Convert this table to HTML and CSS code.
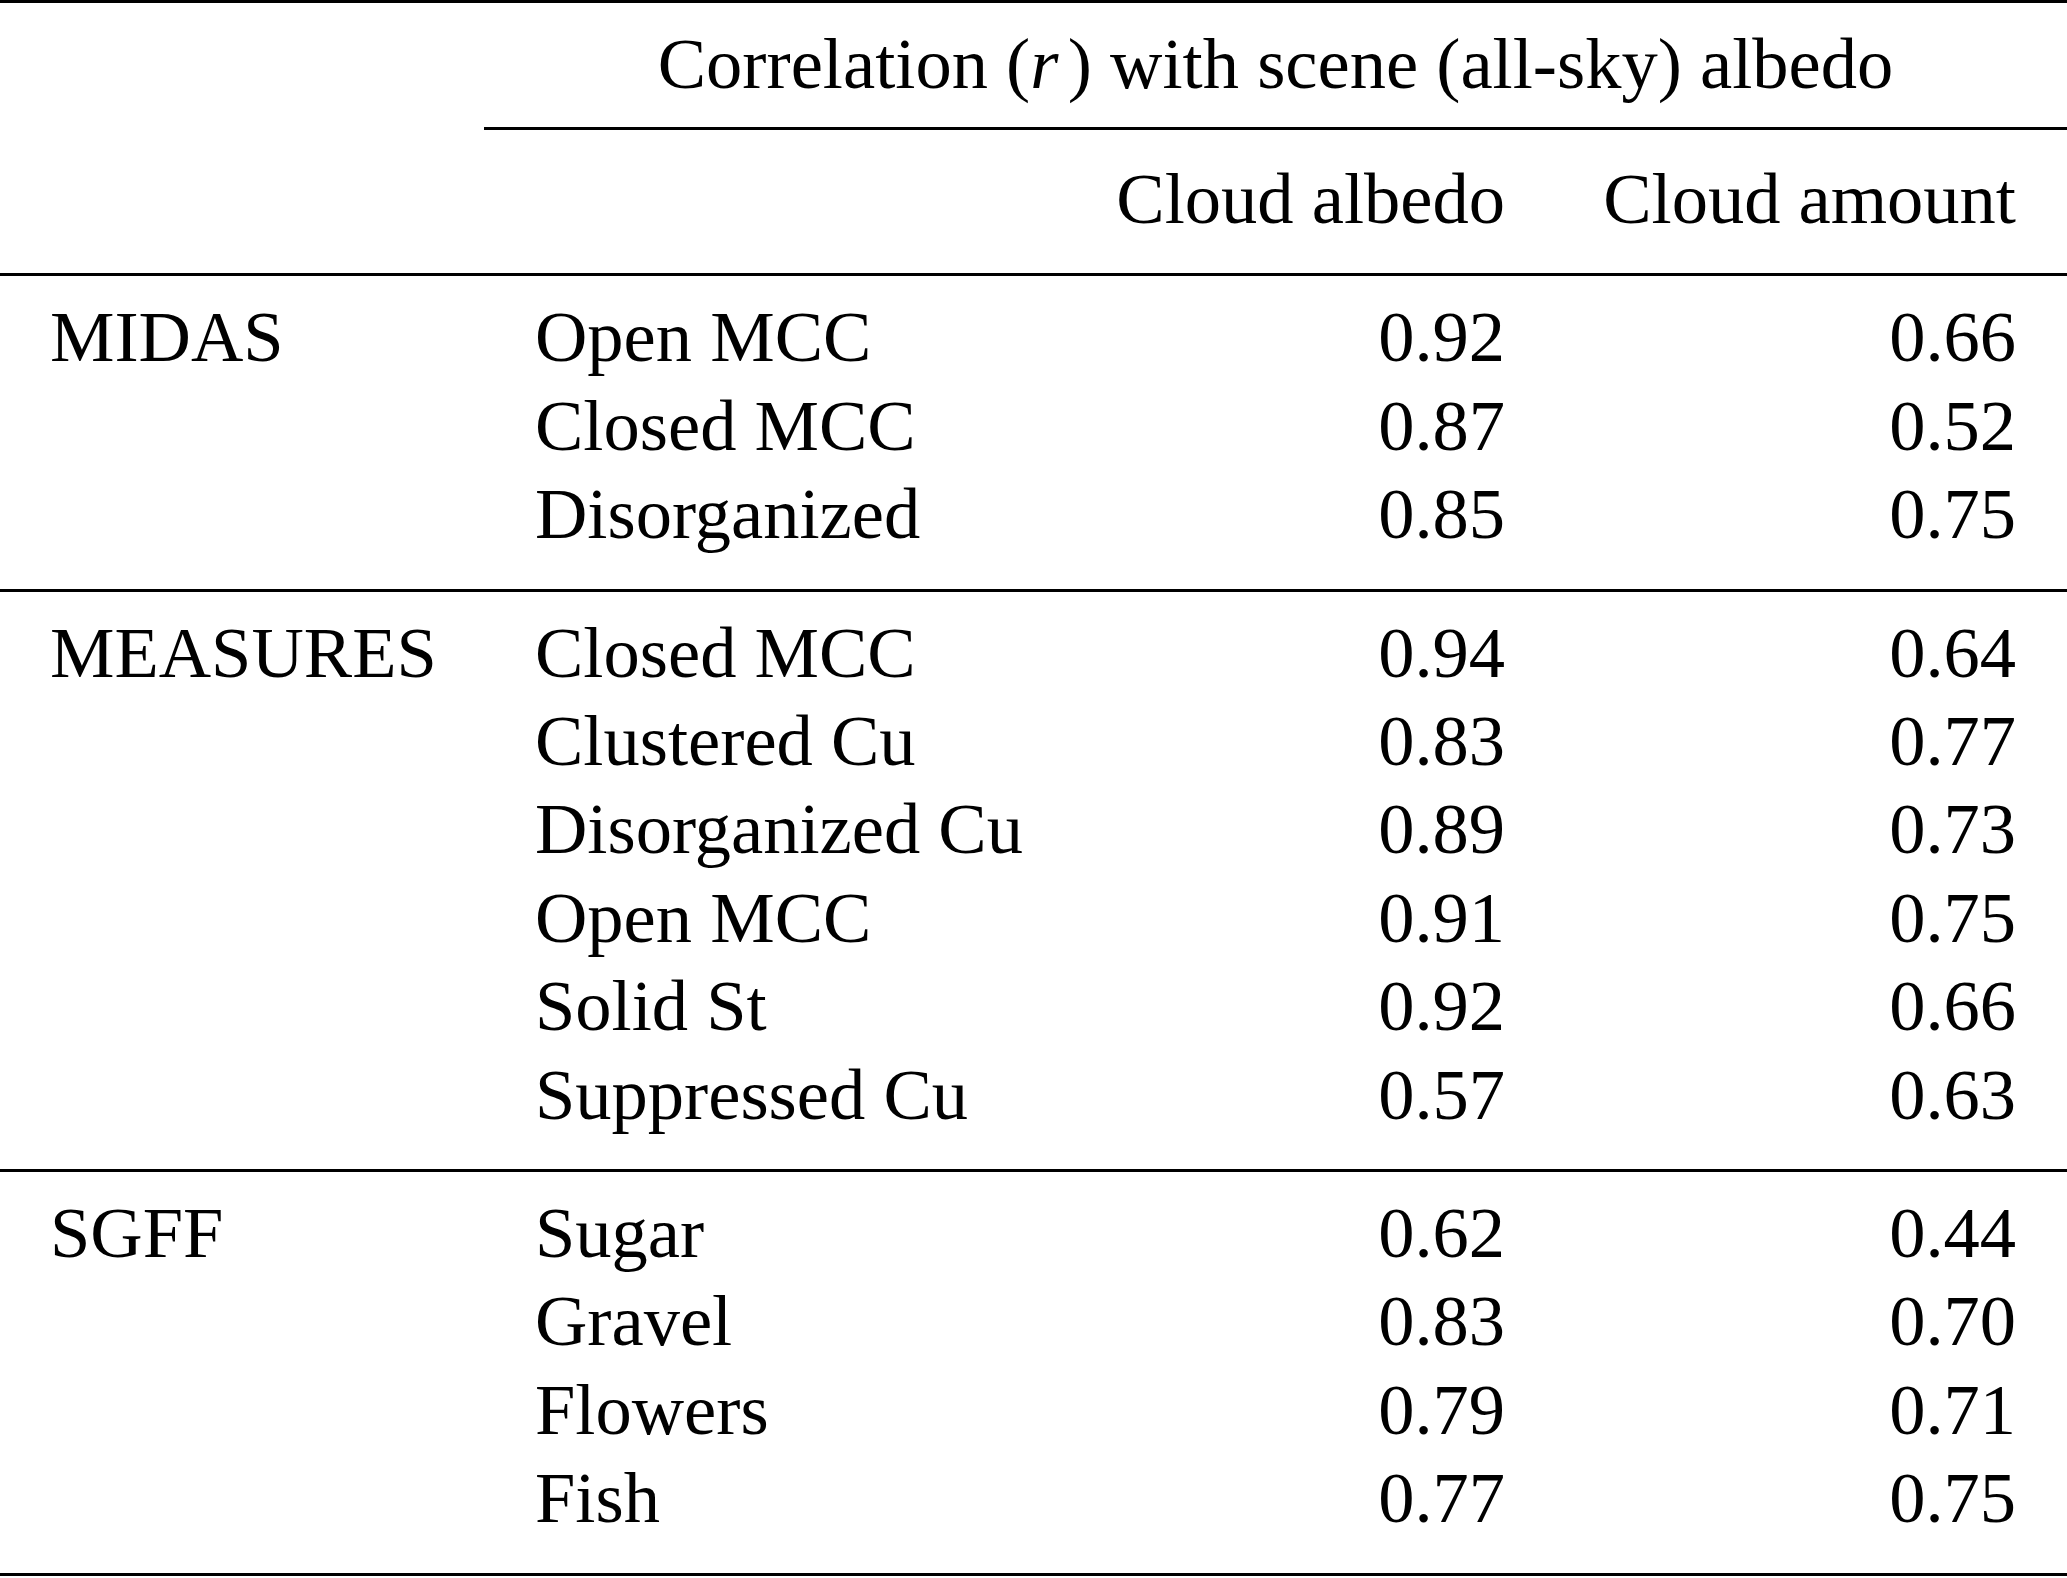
FILE: index.html
```html
<!DOCTYPE html>
<html lang="en">
<head>
<meta charset="utf-8">
<title>Correlation with scene albedo</title>
<link rel="stylesheet" href="styles.css">
</head>
<body>
<table class="corr">
  <colgroup>
    <col class="c-group">
    <col class="c-class">
    <col class="c-num1">
    <col class="c-num2">
  </colgroup>
  <thead>
    <tr class="head-top">
      <th class="blank"></th>
      <th class="span" colspan="3">Correlation (<i class="var">r</i>) with scene (all-sky) albedo</th>
    </tr>
    <tr class="head-sub">
      <th class="blank"></th>
      <th class="blank"></th>
      <th class="num">Cloud albedo</th>
      <th class="num">Cloud amount</th>
    </tr>
  </thead>
  <tbody>
    <tr><td class="grp">MIDAS</td><td class="cls">Open MCC</td><td class="num">0.92</td><td class="num">0.66</td></tr>
    <tr><td class="grp"></td><td class="cls">Closed MCC</td><td class="num">0.87</td><td class="num">0.52</td></tr>
    <tr><td class="grp"></td><td class="cls">Disorganized</td><td class="num">0.85</td><td class="num">0.75</td></tr>
  </tbody>
  <tbody>
    <tr><td class="grp">MEASURES</td><td class="cls">Closed MCC</td><td class="num">0.94</td><td class="num">0.64</td></tr>
    <tr><td class="grp"></td><td class="cls">Clustered Cu</td><td class="num">0.83</td><td class="num">0.77</td></tr>
    <tr><td class="grp"></td><td class="cls">Disorganized Cu</td><td class="num">0.89</td><td class="num">0.73</td></tr>
    <tr><td class="grp"></td><td class="cls">Open MCC</td><td class="num">0.91</td><td class="num">0.75</td></tr>
    <tr><td class="grp"></td><td class="cls">Solid St</td><td class="num">0.92</td><td class="num">0.66</td></tr>
    <tr><td class="grp"></td><td class="cls">Suppressed Cu</td><td class="num">0.57</td><td class="num">0.63</td></tr>
  </tbody>
  <tbody>
    <tr><td class="grp">SGFF</td><td class="cls">Sugar</td><td class="num">0.62</td><td class="num">0.44</td></tr>
    <tr><td class="grp"></td><td class="cls">Gravel</td><td class="num">0.83</td><td class="num">0.70</td></tr>
    <tr><td class="grp"></td><td class="cls">Flowers</td><td class="num">0.79</td><td class="num">0.71</td></tr>
    <tr><td class="grp"></td><td class="cls">Fish</td><td class="num">0.77</td><td class="num">0.75</td></tr>
  </tbody>
</table>
</body>
</html>
```
FILE: styles.css
```css
html, body {
  margin: 0;
  padding: 0;
  background: #ffffff;
}

body {
  font-family: "Liberation Serif", "Times New Roman", serif;
  font-size: 72.5px;
  color: #000000;
}

.corr {
  width: 2067px;
  table-layout: fixed;
  border-collapse: separate;
  border-spacing: 0;
  border-top: 3px solid #000;
}

.c-group { width: 484px; }
.c-class { width: 586px; }
.c-num1 { width: 486px; }
.c-num2 { width: 511px; }

.corr th,
.corr td {
  font-weight: normal;
  line-height: 88.4px;
  padding: 0;
  vertical-align: top;
  white-space: nowrap;
}

.corr .grp {
  text-align: left;
  padding-left: 50px;
}

.corr .cls {
  text-align: left;
  padding-left: 51px;
}

.corr .num {
  text-align: right;
  padding-right: 51px;
}

.head-top th {
  padding-top: 17px;
  padding-bottom: 18.6px;
}

.head-top .span {
  text-align: center;
  border-bottom: 3px solid #000;
}

.head-top .blank {
  padding-bottom: 21.6px;
}

.var {
  font-style: italic;
  margin-right: 0.13em;
}

.head-sub th {
  padding-top: 25px;
  padding-bottom: 30px;
  border-bottom: 3px solid #000;
}

.corr tbody tr:first-child td {
  padding-top: 17px;
}

.corr tbody tr:last-child td {
  padding-bottom: 30px;
  border-bottom: 3px solid #000;
}
```
